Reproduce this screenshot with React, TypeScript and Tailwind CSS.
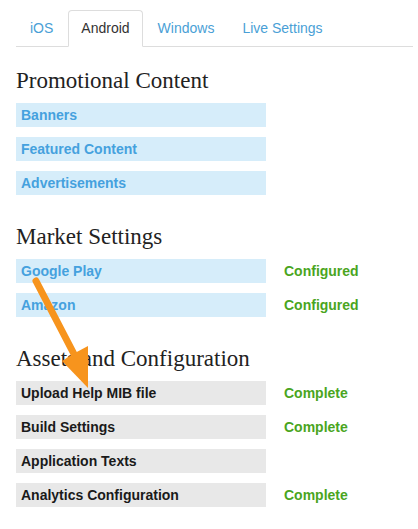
import React from "react";

const tabs = ["iOS", "Android", "Windows", "Live Settings"];

function Bar({ label, kind, status }: { label: string; kind: "blue" | "gray"; status?: string }) {
  return (
    <div className="flex items-center h-[24px]">
      <div
        className={
          "w-[250px] h-[24px] flex items-center pl-[5px] text-[14px] font-bold " +
          (kind === "blue" ? "bg-[#d6edfa] text-[#45a1de]" : "bg-[#e8e8e8] text-[#1a1a1a]")
        }
      >
        {label}
      </div>
      {status ? (
        <div className="ml-[18px] text-[14px] font-bold text-[#4aa51e]">{status}</div>
      ) : null}
    </div>
  );
}

function Heading({ children, first }: { children: React.ReactNode; first?: boolean }) {
  return (
    <h2
      className={
        "text-[23px] leading-[24px] text-[#222] mb-[10px] " + (first ? "mt-[22px]" : "mt-[30px]")
      }
      style={{ fontFamily: '"Liberation Serif", serif' }}
    >
      {children}
    </h2>
  );
}

export default function App() {
  return (
    <div
      className="relative w-[418px] h-[529px] bg-white pt-[10px] pl-[16px] overflow-hidden"
      style={{ fontFamily: '"Liberation Sans", Arial, sans-serif' }}
    >
      <div className="flex border-b border-[#dddddd] mr-[5px] pl-[1px]">
        {tabs.map((t) => {
          const active = t === "Android";
          return (
            <div
              key={t}
              className={
                "h-[37px] -mb-px mr-[2px] px-[12px] flex items-center text-[14px] border rounded-t-[4px] " +
                (active
                  ? "border-[#dddddd] border-b-white bg-white text-[#333]"
                  : "border-transparent text-[#4a9fd6]")
              }
            >
              {t}
            </div>
          );
        })}
      </div>

      <Heading first>Promotional Content</Heading>
      <div className="flex flex-col gap-[10px]">
        <Bar label="Banners" kind="blue" />
        <Bar label="Featured Content" kind="blue" />
        <Bar label="Advertisements" kind="blue" />
      </div>

      <Heading>Market Settings</Heading>
      <div className="flex flex-col gap-[10px]">
        <Bar label="Google Play" kind="blue" status="Configured" />
        <Bar label="Amazon" kind="blue" status="Configured" />
      </div>

      <Heading>Assets and Configuration</Heading>
      <div className="flex flex-col gap-[10px]">
        <Bar label="Upload Help MIB file" kind="gray" status="Complete" />
        <Bar label="Build Settings" kind="gray" status="Complete" />
        <Bar label="Application Texts" kind="gray" />
        <Bar label="Analytics Configuration" kind="gray" status="Complete" />
      </div>

      <svg
        className="absolute left-0 top-0 pointer-events-none"
        width="418"
        height="529"
        viewBox="0 0 418 529"
      >
        <line x1="36" y1="281" x2="75" y2="356" stroke="#f7941d" strokeWidth="7" strokeLinecap="round" />
        <polygon points="88,388 62,361 73,354 88,346" fill="#f7941d" />
      </svg>
    </div>
  );
}
